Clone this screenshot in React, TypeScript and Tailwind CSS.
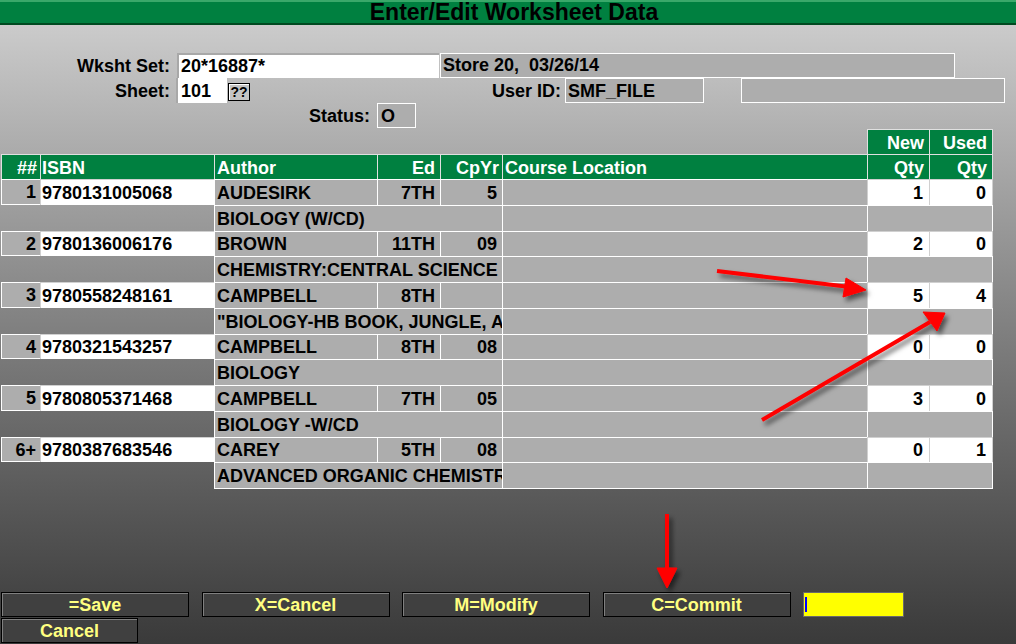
type Row = {
  n: string;
  isbn: string;
  author: string;
  ed: string;
  yr: string;
  title: string;
  newQty: string;
  usedQty: string;
};

const rows: Row[] = [
  { n: "1", isbn: "9780131005068", author: "AUDESIRK", ed: "7TH", yr: "5", title: "BIOLOGY (W/CD)", newQty: "1", usedQty: "0" },
  { n: "2", isbn: "9780136006176", author: "BROWN", ed: "11TH", yr: "09", title: "CHEMISTRY:CENTRAL SCIENCE", newQty: "2", usedQty: "0" },
  { n: "3", isbn: "9780558248161", author: "CAMPBELL", ed: "8TH", yr: "", title: "\"BIOLOGY-HB BOOK, JUNGLE, A", newQty: "5", usedQty: "4" },
  { n: "4", isbn: "9780321543257", author: "CAMPBELL", ed: "8TH", yr: "08", title: "BIOLOGY", newQty: "0", usedQty: "0" },
  { n: "5", isbn: "9780805371468", author: "CAMPBELL", ed: "7TH", yr: "05", title: "BIOLOGY -W/CD", newQty: "3", usedQty: "0" },
  { n: "6+", isbn: "9780387683546", author: "CAREY", ed: "5TH", yr: "08", title: "ADVANCED ORGANIC CHEMISTRY", newQty: "0", usedQty: "1" },
];

const gray = "bg-[#adadad] border-l border-t border-white flex items-center pt-[2px] overflow-hidden whitespace-nowrap";
const white = "bg-white border-l border-t border-[#d0d0d0] flex items-center pt-[2px] overflow-hidden whitespace-nowrap";
const head = "bg-[#008040] border-l border-t border-[#e0e0e0] flex items-center pt-[2px] text-white overflow-hidden whitespace-nowrap";

function Arrows() {
  return (
    <svg className="absolute left-0 top-0 pointer-events-none" width="1016" height="644">
      <defs>
        <filter id="sh" x="-20%" y="-20%" width="140%" height="140%">
          <feDropShadow dx="3" dy="4" stdDeviation="2.5" floodColor="#000" floodOpacity="0.55" />
        </filter>
      </defs>
      <g filter="url(#sh)" fill="#ff0000" stroke="#ff0000">
        <line x1="717" y1="271" x2="850" y2="287" strokeWidth="4" />
        <polygon points="866,290 846,278 843,297" strokeWidth="1" />
        <line x1="762" y1="420" x2="930" y2="322" strokeWidth="4" />
        <polygon points="945,313 923,312 937,331" strokeWidth="1" />
        <line x1="667" y1="514" x2="667" y2="572" strokeWidth="4" />
        <polygon points="667,588 657,568 677,568" strokeWidth="1" />
      </g>
    </svg>
  );
}

function Btn({ label, w }: { label: string; w: string }) {
  return (
    <div
      className={`${w} h-[25px] bg-[#404040] border border-black shadow-[inset_1px_1px_0_#808080] flex items-center justify-center pt-[2px] text-[#ffff80] font-bold text-[18px]`}
    >
      {label}
    </div>
  );
}

export default function App() {
  return (
    <div className="relative w-[1016px] h-[644px] overflow-hidden font-['Liberation_Sans',Arial,sans-serif] text-black flex flex-col">
      <div className="h-[25px] bg-[#008040] border-t-2 border-t-[#3aa86a] border-b-2 border-b-[#004a20] flex items-center justify-center pl-[12px] text-[23px] font-bold leading-none">
        Enter/Edit Worksheet Data
      </div>

      <div className="flex-1 flex flex-col bg-linear-to-b from-[#cbcbcb] to-[#3a3a3a] text-[18px] font-bold">
        <div className="flex h-[25px] mt-[28px]">
          <div className="w-[170px] flex items-center justify-end pt-[1px]">Wksht Set:</div>
          <div className="ml-[7px] w-[262px] bg-white border-t-2 border-l-2 border-[#a8a8a8] flex items-center pl-[2px]">20*16887*</div>
          <div className="ml-[1px] w-[515px] bg-[#adadad] border border-white flex items-center pl-[2px] whitespace-pre">Store 20,  03/26/14</div>
        </div>

        <div className="flex h-[25px]">
          <div className="w-[170px] flex items-center justify-end pt-[1px]">Sheet:</div>
          <div className="ml-[6px] w-[51px] bg-white border-l-2 border-[#a8a8a8] flex items-center pl-[3px] pt-[1px]">101</div>
          <div className="ml-[1px] mt-[5px] w-[22px] h-[18px] bg-[#c4c4c4] border border-black shadow-[inset_1px_1px_0_#ffffff] flex items-center justify-center text-[14px]">??</div>
          <div className="w-[311px] flex items-center justify-end pt-[1px]">User ID:</div>
          <div className="ml-[4px] w-[139px] bg-[#adadad] border border-white flex items-center pl-[2px] pt-[1px]">SMF_FILE</div>
          <div className="ml-[37px] w-[264px] bg-[#adadad] border border-white"></div>
        </div>

        <div className="flex h-[25px]">
          <div className="w-[370px] flex items-center justify-end pt-[2px]">Status:</div>
          <div className="ml-[7px] w-[39px] bg-[#adadad] border border-white flex items-center pl-[3px] pt-[2px]">O</div>
        </div>

        <div className="flex flex-col ml-[1px]">
          <div className="flex h-[25px] mt-[1px]">
            <div className="w-[866px]"></div>
            <div className={`${head} w-[62px] justify-end pr-[5px]`}>New</div>
            <div className={`${head} w-[64px] justify-end pr-[5px] border-r`}>Used</div>
          </div>
          <div className="flex h-[25px]">
            <div className={`${head} w-[39px] justify-end pr-[3px]`}>##</div>
            <div className={`${head} w-[174px] pl-[1px]`}>ISBN</div>
            <div className={`${head} w-[163px] pl-[2px]`}>Author</div>
            <div className={`${head} w-[63px] justify-end pr-[5px]`}>Ed</div>
            <div className={`${head} w-[62px] justify-end pr-[3px]`}>CpYr</div>
            <div className={`${head} w-[365px] pl-[2px]`}>Course Location</div>
            <div className={`${head} w-[62px] justify-end pr-[5px]`}>Qty</div>
            <div className={`${head} w-[64px] justify-end pr-[5px] border-r`}>Qty</div>
          </div>

          {rows.map((r) => (
            <div key={r.isbn} className="flex flex-col">
              <div className="flex h-[25.75px]">
                <div className={`${gray} w-[39px] justify-end pr-[4px] border-b`}>{r.n}</div>
                <div className={`${white} w-[174px] pl-[1px]`}>{r.isbn}</div>
                <div className={`${gray} w-[163px] pl-[2px]`}>{r.author}</div>
                <div className={`${gray} w-[63px] justify-end pr-[5px]`}>{r.ed}</div>
                <div className={`${gray} w-[62px] justify-end pr-[5px]`}>{r.yr}</div>
                <div className={`${gray} w-[365px]`}></div>
                <div className={`${white} w-[62px] justify-end pr-[6px]`}>{r.newQty}</div>
                <div className={`${white} w-[64px] justify-end pr-[6px] border-r`}>{r.usedQty}</div>
              </div>
              <div className="flex h-[25.75px]">
                <div className="w-[213px]"></div>
                <div className={`${gray} w-[288px] pl-[2px]`}>{r.title}</div>
                <div className={`${gray} w-[365px]`}></div>
                <div className={`${gray} w-[126px] border-r`}></div>
              </div>
            </div>
          ))}
          <div className="w-[779px] ml-[213px] border-t border-white"></div>
        </div>

        <div className="mt-auto flex flex-col gap-[1px] pl-[1px] pb-[1px]">
          <div className="flex gap-[12.5px]">
            <Btn label="=Save" w="w-[188px]" />
            <Btn label="X=Cancel" w="w-[188px]" />
            <Btn label="M=Modify" w="w-[188px]" />
            <Btn label="C=Commit" w="w-[188px]" />
            <div className="w-[101px] h-[25px] bg-[#ffff00] border border-[#6a6a6a] flex items-center pl-[1px]">
              <div className="w-[2px] h-[15px] bg-[#0000ff]"></div>
            </div>
          </div>
          <Btn label="Cancel" w="w-[137px]" />
        </div>
      </div>

      <Arrows />
    </div>
  );
}
